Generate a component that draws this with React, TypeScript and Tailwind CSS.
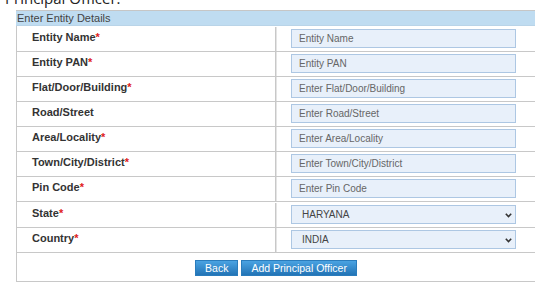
import React from "react";

const rows: { label: string; req: boolean; ph?: string; sel?: string }[] = [
  { label: "Entity Name", req: true, ph: "Entity Name" },
  { label: "Entity PAN", req: true, ph: "Entity PAN" },
  { label: "Flat/Door/Building", req: true, ph: "Enter Flat/Door/Building" },
  { label: "Road/Street", req: false, ph: "Enter Road/Street" },
  { label: "Area/Locality", req: true, ph: "Enter Area/Locality" },
  { label: "Town/City/District", req: true, ph: "Enter Town/City/District" },
  { label: "Pin Code", req: true, ph: "Enter Pin Code" },
  { label: "State", req: true, sel: "HARYANA" },
  { label: "Country", req: true, sel: "INDIA" },
];

function Chevron() {
  return (
    <svg width="7" height="5" viewBox="0 0 7 5" className="absolute right-[3px] top-[7px]">
      <path d="M0.8 0.8 L3.5 3.6 L6.2 0.8" fill="none" stroke="#333" strokeWidth="1.6" />
    </svg>
  );
}

export default function App() {
  return (
    <div
      className="relative w-[550px] h-[300px] bg-white overflow-hidden"
      style={{ fontFamily: '"Liberation Sans", Arial, sans-serif' }}
    >
      <div
        className="ml-[5px] -mt-[11px] h-[21px] text-[15px] leading-[18px] text-[#222]"
        style={{ fontFamily: '"Open Sans", sans-serif' }}
      >
        Principal Officer.
      </div>
      <div className="ml-[16px] w-[519px]">
        <div className="h-[16px] bg-[#bfdcf1] border-t border-b border-[#c6c6c6] border-b-[#b9d4e8] pl-[1px] text-[11px] leading-[14px] text-[#444]">
          Enter Entity Details
        </div>
        <div className="border-l border-[#c8c8c8]">
          {rows.map((r, i) => (
            <div
              key={r.label}
              className={
                "flex border-b border-[#c8c8c8] " +
                (i === 0 ? "h-[26px] pt-[1px]" : i === 7 ? "h-[26px] pt-[1px]" : "h-[25px]")
              }
            >
              <div className="w-[259px] border-r border-[#c8c8c8] pl-[15px] pt-[3px] text-[11px] leading-[14px] font-bold text-[#333]">
                {r.label}
                {r.req && <span className="text-[#e02020]">*</span>}
              </div>
              <div className="flex-1 border-l border-[#e4e4e4] pl-[14px] pt-[2px]">
                {r.ph ? (
                  <div className="w-[225px] h-[19px] bg-[#e8f0fa] border border-[#adc7e3] pl-[7px] text-[10px] leading-[17px] text-[#666]">
                    {r.ph}
                  </div>
                ) : (
                  <div className="relative w-[225px] h-[19px] bg-[#e8f0fa] border border-[#adc7e3] pl-[10px] text-[10px] leading-[17px] text-[#444]">
                    {r.sel}
                    <Chevron />
                  </div>
                )}
              </div>
            </div>
          ))}
          <div className="flex h-[29px] border-b border-[#c8c8c8] items-start justify-center gap-[3px] pt-[7px]">
            <button className="h-[16px] px-[9px] bg-gradient-to-b from-[#4aa3e2] to-[#2274b6] border border-[#2a7cbc] text-white text-[10.5px] leading-[14px]">
              Back
            </button>
            <button className="h-[16px] px-[9px] bg-gradient-to-b from-[#4aa3e2] to-[#2274b6] border border-[#2a7cbc] text-white text-[10.5px] leading-[14px]">
              Add Principal Officer
            </button>
          </div>
        </div>
      </div>
    </div>
  );
}
